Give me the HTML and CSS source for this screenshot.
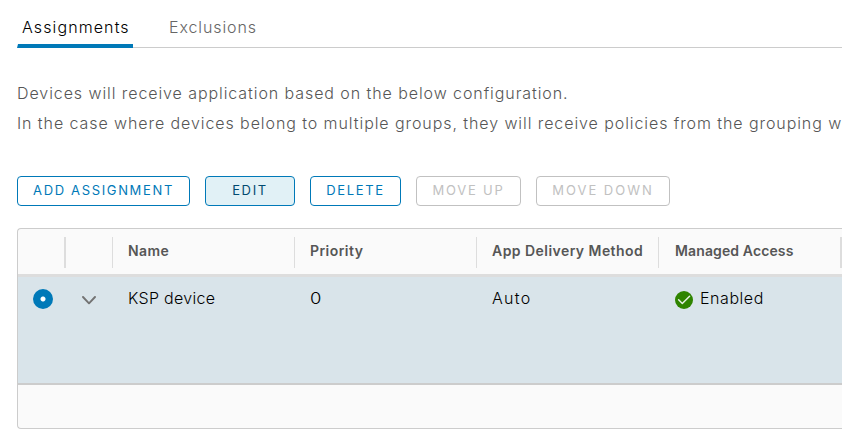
FILE: index.html
```html
<!DOCTYPE html>
<html lang="en">
<head>
<meta charset="utf-8">
<title>Assignments</title>
<link rel="stylesheet" href="styles.css">
</head>
<body>
<nav class="tabs">
  <a class="tab active"><span class="t-assign">Assignments</span></a>
  <a class="tab"><span class="t-excl">Exclusions</span></a>
</nav>
<div class="intro">
  <p><span>Devices will receive application based on the below configuration.</span></p>
  <p><span>In the case where devices belong to multiple groups, they will receive policies from the grouping w</span></p>
</div>
<div class="toolbar">
  <button class="btn add"><span>ADD ASSIGNMENT</span></button>
  <button class="btn edit"><span>EDIT</span></button>
  <button class="btn delete"><span>DELETE</span></button>
  <button class="btn up" disabled><span>MOVE UP</span></button>
  <button class="btn down" disabled><span>MOVE DOWN</span></button>
</div>
<div class="datagrid">
  <div class="row head">
    <div class="cell wide"></div>
    <div class="cell"></div>
    <div class="cell"><span>Name</span></div>
    <div class="cell"><span>Priority</span></div>
    <div class="cell"><span>App Delivery Method</span></div>
    <div class="cell wide last"><span class="h-acc">Managed Access</span></div>
  </div>
  <div class="row body">
    <div class="cell pick"><span class="radio"></span></div>
    <div class="cell caret"><svg width="14" height="9" viewBox="0 0 14 9"><path d="M1 1l6 6.3L13 1" fill="none" stroke="#737373" stroke-width="1.9" stroke-linecap="round" stroke-linejoin="round"/></svg></div>
    <div class="cell"><span class="ksp">KSP device</span></div>
    <div class="cell"><span class="zero">0</span></div>
    <div class="cell"><span class="auto">Auto</span></div>
    <div class="cell status last"><svg width="18" height="18" viewBox="0 0 18 18"><circle cx="9" cy="9" r="9" fill="#2f8400"/><path d="M3.6 8.8l3.7 3.7 7.3-7.2" fill="none" stroke="#e6f0e4" stroke-width="1.5" stroke-linecap="round" stroke-linejoin="round"/></svg><span class="enabled">Enabled</span></div>
  </div>
  <div class="foot"></div>
</div>
</body>
</html>
```
FILE: styles.css
```css
* { box-sizing: border-box; }
body {
  margin: 0;
  height: 432px;
  padding-left: 17px;
  overflow: hidden;
  background: #fff;
  color: #565656;
  font: 300 16px/24px Inter, "Liberation Sans", sans-serif;
}
p { margin: 0; }
span { white-space: nowrap; }
.tabs {
  display: flex;
  gap: 32px;
  height: 48px;
  box-shadow: inset 0 -1px #ccc;
}
.tab { height: 48px; padding: 15px 4px 0 4px; color: #666; }
.tab.active {
  width: 116px;
  color: #000;
  border-bottom: 4px solid #0079b8;
  border-left: 1px solid #fff;
}
.t-assign { letter-spacing: 1.1px; }
.t-excl { letter-spacing: .9px; }
.intro {
  height: 128px;
  padding-top: 30px;
  overflow: hidden;
  line-height: 30px;
  letter-spacing: .92px;
}
.toolbar { display: flex; gap: 15px; }
.btn {
  height: 30px;
  padding: 0 0 2px;
  border: 1px solid #0079b8;
  border-radius: 4px;
  background: #fff;
  color: #0079b8;
  font: 400 13px/26px Inter, sans-serif;
  letter-spacing: 1.65px;
}
.btn:disabled { border-color: #c1c1c1; color: #c1c1c1; }
.add { width: 173px; }
.edit { width: 90px; background: #e1f1f6; color: #004a70; }
.delete { width: 91px; }
.up { width: 105px; letter-spacing: 1.75px; }
.down { width: 134px; letter-spacing: 2px; }
.datagrid {
  height: 201px;
  margin-top: 22px;
  border: 1px solid #ccc;
  border-right: 0;
  border-radius: 4px 0 0 4px;
  background: #fafafa;
  overflow: hidden;
}
.row { display: grid; grid-template-columns: 48px 47px 182px 182px 182px 183px; }
.head {
  height: 48px;
  padding-top: 8px;
  border-bottom: 3px solid #ddd;
  font-size: 14px;
  font-weight: 600;
  line-height: 28px;
  letter-spacing: .45px;
}
.head .cell { height: 31px; border-right: 1px solid #ddd; }
.head .wide { border-right-width: 2px; }
.h-acc { letter-spacing: .12px; }
.cell { padding-left: 15px; }
.cell.last { padding-left: 16px; }
.body {
  height: 108px;
  padding-top: 9px;
  border-bottom: 2px solid #ccc;
  background: #d9e4ea;
  color: #000;
}
.radio {
  display: block;
  width: 20px;
  height: 20px;
  margin-top: 3px;
  border-radius: 50%;
  background: radial-gradient(circle, #fff 2px, #0079b8 3px);
}
.ksp { letter-spacing: .3px; }
.zero { display: inline-block; transform: scaleX(1.15); transform-origin: left; }
.auto { letter-spacing: 1.3px; }
.enabled { letter-spacing: .55px; }
.caret { padding: 10px 0 0 16px; }
.caret svg, .status svg { display: block; }
.status { display: flex; gap: 7px; }
.status svg { margin-top: 5px; }
```
